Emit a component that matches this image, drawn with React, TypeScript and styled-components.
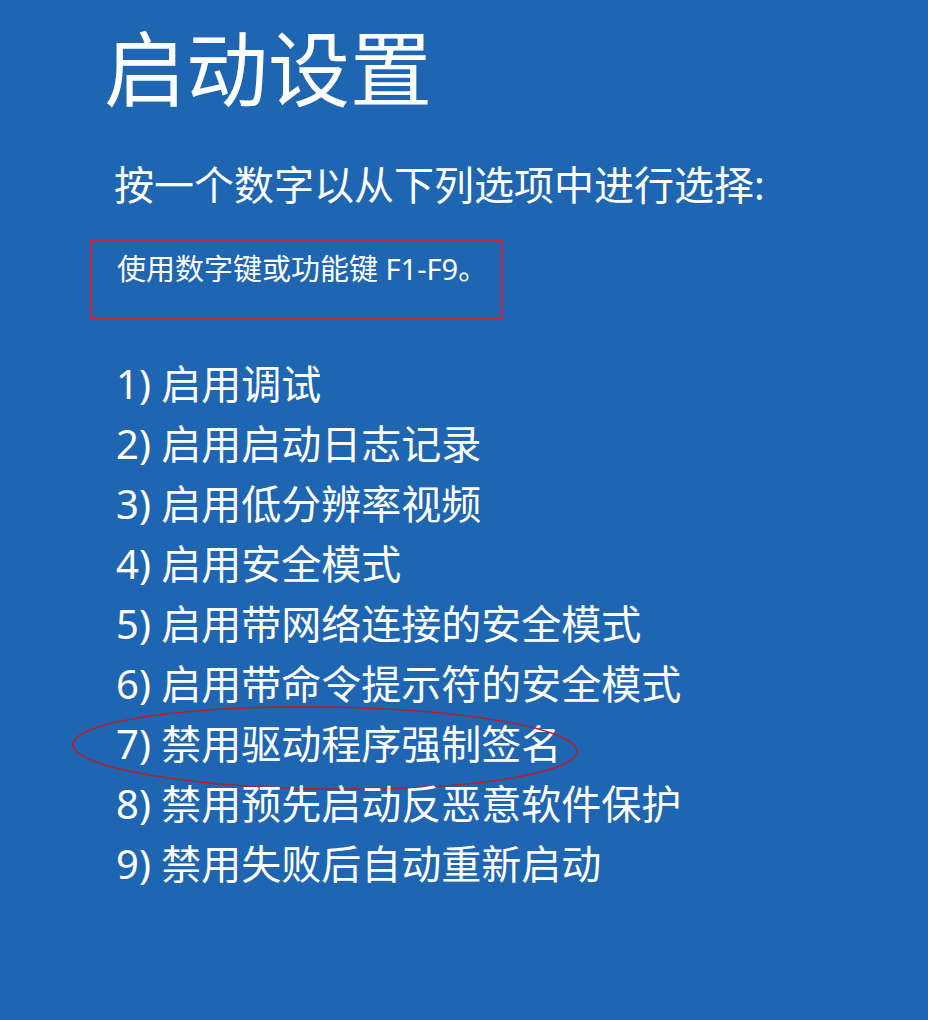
import React from "react";
import styled, { createGlobalStyle } from "styled-components";

const GlobalStyle = createGlobalStyle`
  html, body {
    margin: 0;
    padding: 0;
    background: #1f66b2;
  }
  body {
    font-family: "Noto Sans", "Noto Sans CJK SC", sans-serif;
    color: #ffffff;
  }
`;

const Screen = styled.main`
  width: 928px;
  height: 1020px;
  box-sizing: border-box;
  background: #1f66b2;
  padding: 17px 0 0 90px;
  display: flex;
  flex-direction: column;
  align-items: flex-start;
  overflow: hidden;
`;

const Title = styled.h1`
  margin: 0 0 0 14px;
  font-family: "Noto Sans CJK SC", sans-serif;
  font-weight: 400;
  font-size: 82px;
  line-height: 96px;
  letter-spacing: 0;
`;

const Prompt = styled.p`
  margin: 48px 0 0 24px;
  font-family: "Noto Sans", "Noto Sans CJK SC", sans-serif;
  font-weight: 400;
  font-size: 40px;
  line-height: 48px;
`;

const HintBox = styled.div`
  margin-top: 31px;
  width: 413px;
  height: 79px;
  box-sizing: border-box;
  border: 2px solid #c8283c;
  padding: 9px 0 0 25px;
`;

const HintText = styled.span`
  font-family: "Noto Sans", "Noto Sans CJK SC", sans-serif;
  font-size: 29px;
  line-height: 36px;
`;

const OptionList = styled.ol`
  list-style: none;
  margin: 35px 0 0 26px;
  padding: 0;
  display: flex;
  flex-direction: column;
`;

const Option = styled.li`
  position: relative;
  font-family: "Noto Sans", "Noto Sans CJK SC", sans-serif;
  font-size: 40px;
  line-height: 60px;
  white-space: nowrap;
`;

const Circle = styled.svg`
  position: absolute;
  left: -44px;
  top: -10px;
  width: 512px;
  height: 90px;
  overflow: visible;
  pointer-events: none;
`;

const options = [
  "启用调试",
  "启用启动日志记录",
  "启用低分辨率视频",
  "启用安全模式",
  "启用带网络连接的安全模式",
  "启用带命令提示符的安全模式",
  "禁用驱动程序强制签名",
  "禁用预先启动反恶意软件保护",
  "禁用失败后自动重新启动",
];

export default function App() {
  return (
    <>
      <GlobalStyle />
      <Screen>
        <Title>启动设置</Title>
        <Prompt>按一个数字以从下列选项中进行选择:</Prompt>
        <HintBox>
          <HintText>使用数字键或功能键 F1-F9。</HintText>
        </HintBox>
        <OptionList>
          {options.map((label, i) => (
            <Option key={label}>
              {i + 1}) {label}
              {i === 6 && (
                <Circle viewBox="0 0 512 90">
                  <ellipse
                    cx="253"
                    cy="44"
                    rx="252"
                    ry="41"
                    fill="none"
                    stroke="#b3202f"
                    strokeWidth="1.6"
                    transform="rotate(0.8 253 44)"
                  />
                </Circle>
              )}
            </Option>
          ))}
        </OptionList>
      </Screen>
    </>
  );
}
